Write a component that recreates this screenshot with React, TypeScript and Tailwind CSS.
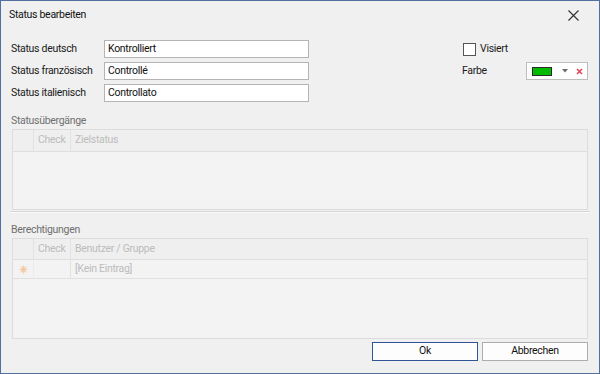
import React from "react";

const font = { fontFamily: "Roboto, 'Liberation Sans', sans-serif" };

function Field({ label, value }: { label: string; value: string }) {
  return (
    <div className="flex items-center h-[18px]">
      <div className="w-[93px] whitespace-nowrap text-[10.5px] tracking-[-0.3px] text-[#1a1a1a] leading-none">{label}</div>
      <div className="w-[205px] h-[18px] bg-white border border-[#b4b4b4] flex items-center pl-[3px] text-[10.5px] tracking-[-0.3px] text-[#111] leading-none">
        {value}
      </div>
    </div>
  );
}

function HeaderRow({ col2, col3, h }: { col2: string; col3: string; h: string }) {
  return (
    <div className={"flex bg-[#efefef] border-b border-[#dedede] text-[10.5px] tracking-[-0.3px] text-[#bcbcbc] leading-none " + h}>
      <div className="w-[21px] border-r border-[#e2e2e2]"></div>
      <div className="w-[37px] border-r border-[#e2e2e2] flex items-center pl-[4px]">{col2}</div>
      <div className="flex-1 flex items-center pl-[4px]">{col3}</div>
    </div>
  );
}

export default function App() {
  return (
    <div
      style={font}
      className="w-[600px] h-[374px] bg-[#f0f0f0] border border-[#50709e] flex flex-col overflow-hidden"
    >
      {/* Title bar */}
      <div className="h-[29px] flex items-center justify-between pl-[8px] pr-[20px]">
        <span className="text-[10.5px] tracking-[-0.3px] text-[#111] leading-none">Status bearbeiten</span>
        <svg width="11" height="11" viewBox="0 0 11 11">
          <path d="M0.5 0.5 L10.5 10.5 M10.5 0.5 L0.5 10.5" stroke="#333" strokeWidth="1.2" />
        </svg>
      </div>

      {/* Form */}
      <div className="flex pl-[10px] pr-[11px] mt-[10px]">
        <div className="flex flex-col gap-[4px]">
          <Field label="Status deutsch" value="Kontrolliert" />
          <Field label="Status französisch" value="Controllé" />
          <Field label="Status italienisch" value="Controllato" />
        </div>
        <div className="flex-1"></div>
        <div className="w-[126px] flex flex-col gap-[4px]">
          <div className="h-[18px] flex items-center pl-[1px]">
            <div className="w-[13px] h-[13px] bg-white border border-[#555]"></div>
            <span className="ml-[4px] text-[10.5px] tracking-[-0.3px] text-[#1a1a1a] leading-none">Visiert</span>
          </div>
          <div className="h-[18px] flex items-center">
            <span className="w-[64px] text-[10.5px] tracking-[-0.3px] text-[#1a1a1a] leading-none">Farbe</span>
            <div className="w-[62px] h-[18px] bg-white border border-[#bdbdbd] flex items-center pl-[5px]">
              <div className="w-[20px] h-[9px] bg-[#00bb00] border border-[#2a2a2a]"></div>
              <svg className="ml-[10px]" width="6" height="4" viewBox="0 0 6 4">
                <path d="M0 0 H6 L3 3.5 Z" fill="#6b6b6b" />
              </svg>
              <svg className="ml-[8px]" width="7" height="7" viewBox="0 0 7 7">
                <path d="M1 1 L6 6 M6 1 L1 6" stroke="#e34556" strokeWidth="1.6" />
              </svg>
            </div>
          </div>
        </div>
      </div>

      {/* Statusübergänge */}
      <div className="pl-[11px] pr-[11px] mt-[12px]">
        <div className="h-[14px] -ml-[1px] flex items-center text-[10.5px] tracking-[-0.3px] text-[#6f6f6f] leading-none">Statusübergänge</div>
        <div className="mt-[1px] h-[81px] border border-[#dcdcdc] bg-[#f3f3f3] flex flex-col">
          <HeaderRow col2="Check" col3="Zielstatus" h="h-[22px]" />
        </div>
      </div>

      <div className="mx-[9px] mt-[1px] h-[2px] border-t border-[#d5d5d5] border-b border-b-[#fbfbfb]"></div>

      {/* Berechtigungen */}
      <div className="pl-[11px] pr-[11px] mt-[10px]">
        <div className="h-[14px] -ml-[1px] flex items-center text-[10.5px] tracking-[-0.3px] text-[#6f6f6f] leading-none">Berechtigungen</div>
        <div className="mt-[1px] h-[101px] border border-[#dcdcdc] bg-[#f3f3f3] flex flex-col">
          <HeaderRow col2="Check" col3="Benutzer / Gruppe" h="h-[21px]" />
          <div className="flex h-[19px] border-b border-[#e0e0e0] text-[10.5px] tracking-[-0.3px] text-[#bcbcbc] leading-none">
            <div className="w-[21px] border-r border-[#ececec] flex items-center justify-center">
              <svg width="9" height="9" viewBox="0 0 9 9">
                <g stroke="#f4cba8" strokeWidth="1.2">
                  <path d="M4.5 0.5 V8.5 M0.5 4.5 H8.5 M1.7 1.7 L7.3 7.3 M7.3 1.7 L1.7 7.3" />
                </g>
                <circle cx="4.5" cy="4.5" r="2" fill="#f2c9a4" />
              </svg>
            </div>
            <div className="w-[37px] border-r border-[#e2e2e2]"></div>
            <div className="flex-1 flex items-center pl-[4px]">[Kein Eintrag]</div>
          </div>
        </div>
      </div>

      {/* Buttons */}
      <div className="flex justify-end gap-[4px] pr-[11px] mt-[3px]">
        <button className="w-[106px] h-[19px] bg-[#fdfdfd] border border-[#2f5596] text-[10.5px] tracking-[-0.3px] text-[#111] leading-none">
          Ok
        </button>
        <button className="w-[106px] h-[19px] bg-[#fdfdfd] border border-[#adadad] text-[10.5px] tracking-[-0.3px] text-[#111] leading-none">
          Abbrechen
        </button>
      </div>
    </div>
  );
}
